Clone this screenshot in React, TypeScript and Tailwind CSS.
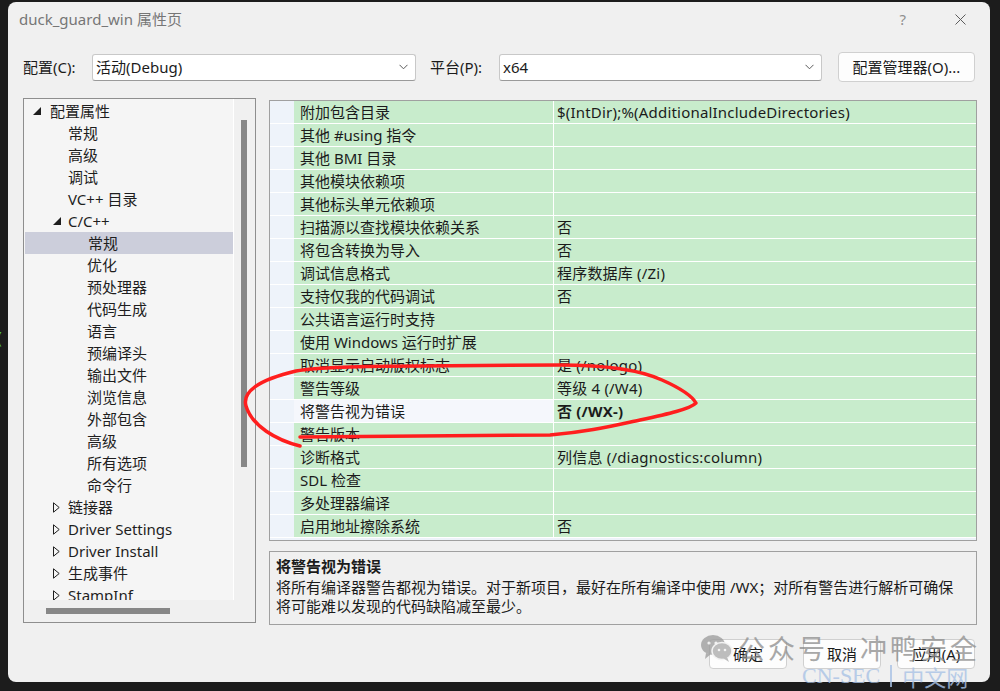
// 属性页对话框 (VS C/C++ 常规)
import React from 'react';

type TreeNode = {
  label: string;
  level: 0 | 1 | 2;
  arrow?: 'open' | 'closed';
  selected?: boolean;
};

const tree: TreeNode[] = [
  { label: '配置属性', level: 0, arrow: 'open' },
  { label: '常规', level: 1 },
  { label: '高级', level: 1 },
  { label: '调试', level: 1 },
  { label: 'VC++ 目录', level: 1 },
  { label: 'C/C++', level: 1, arrow: 'open' },
  { label: '常规', level: 2, selected: true },
  { label: '优化', level: 2 },
  { label: '预处理器', level: 2 },
  { label: '代码生成', level: 2 },
  { label: '语言', level: 2 },
  { label: '预编译头', level: 2 },
  { label: '输出文件', level: 2 },
  { label: '浏览信息', level: 2 },
  { label: '外部包含', level: 2 },
  { label: '高级', level: 2 },
  { label: '所有选项', level: 2 },
  { label: '命令行', level: 2 },
  { label: '链接器', level: 1, arrow: 'closed' },
  { label: 'Driver Settings', level: 1, arrow: 'closed' },
  { label: 'Driver Install', level: 1, arrow: 'closed' },
  { label: '生成事件', level: 1, arrow: 'closed' },
  { label: 'StampInf', level: 1, arrow: 'closed' },
];

const rows: { name: string; value: string; selected?: boolean }[] = [
  { name: '附加包含目录', value: '$(IntDir);%(AdditionalIncludeDirectories)' },
  { name: '其他 #using 指令', value: '' },
  { name: '其他 BMI 目录', value: '' },
  { name: '其他模块依赖项', value: '' },
  { name: '其他标头单元依赖项', value: '' },
  { name: '扫描源以查找模块依赖关系', value: '否' },
  { name: '将包含转换为导入', value: '否' },
  { name: '调试信息格式', value: '程序数据库 (/Zi)' },
  { name: '支持仅我的代码调试', value: '否' },
  { name: '公共语言运行时支持', value: '' },
  { name: '使用 Windows 运行时扩展', value: '' },
  { name: '取消显示启动版权标志', value: '是 (/nologo)' },
  { name: '警告等级', value: '等级 4 (/W4)' },
  { name: '将警告视为错误', value: '否 (/WX-)', selected: true },
  { name: '警告版本', value: '' },
  { name: '诊断格式', value: '列信息 (/diagnostics:column)' },
  { name: 'SDL 检查', value: '' },
  { name: '多处理器编译', value: '' },
  { name: '启用地址擦除系统', value: '否' },
];

function Chevron() {
  return (
    <svg width="9" height="6" viewBox="0 0 9 6" className="mr-[7px]">
      <path d="M0.5 0.8 L4.5 4.8 L8.5 0.8" fill="none" stroke="#5a5a5a" strokeWidth="1" />
    </svg>
  );
}

function Select({ value, width }: { value: string; width: string }) {
  return (
    <div
      className={`${width} h-[27px] flex items-center justify-between bg-white border border-[#c8c8c8] border-b-[#9a9a9a] rounded-[3px] pl-[3px]`}
    >
      <span className="text-[15px] text-[#1b1b1b]">{value}</span>
      <Chevron />
    </div>
  );
}

function TreeRow({ node }: { node: TreeNode }) {
  const pad =
    node.level === 0 ? 'pl-[9px]' : node.level === 1 ? (node.arrow ? 'pl-[29px]' : 'pl-[44px]') : 'pl-[63px]';
  return (
    <div
      className={`h-[22px] flex items-center ${pad} ${node.selected ? 'bg-[#cccedb] ml-[1px]' : ''}`}
    >
      {node.arrow === 'open' && (
        <span className={`${node.level === 0 ? 'w-[17px]' : 'w-[15px]'} flex items-center`}>
          <svg width="8" height="8" viewBox="0 0 8 8">
            <polygon points="0,8 8,8 8,0" fill="#1e1e1e" />
          </svg>
        </span>
      )}
      {node.arrow === 'closed' && (
        <span className="w-[15px] flex items-center">
          <svg width="7" height="11" viewBox="0 0 7 11">
            <polygon points="0.5,0.8 6.2,5.5 0.5,10.2" fill="none" stroke="#1e1e1e" strokeWidth="1" />
          </svg>
        </span>
      )}
      <span className="text-[15px] text-[#1e1e1e] whitespace-nowrap">{node.label}</span>
    </div>
  );
}

function WeChatIcon() {
  return (
    <svg width="34" height="30" viewBox="0 0 34 30">
      <ellipse cx="13" cy="12" rx="12" ry="10" fill="#9a9a9a" />
      <path d="M6 20 L5 26 L11 21 Z" fill="#9a9a9a" />
      <ellipse cx="22" cy="18" rx="10" ry="8.5" fill="#a8a8a8" stroke="#f0f0f0" strokeWidth="1.5" />
      <path d="M27 24 L29 29 L23 25 Z" fill="#a8a8a8" />
      <circle cx="9" cy="10" r="1.6" fill="#f0f0f0" />
      <circle cx="16" cy="10" r="1.6" fill="#f0f0f0" />
      <circle cx="19" cy="17" r="1.3" fill="#f0f0f0" />
      <circle cx="25" cy="17" r="1.3" fill="#f0f0f0" />
    </svg>
  );
}

export default function App() {
  return (
    <div className="relative w-[1000px] h-[691px] bg-[#1c1c1c] overflow-hidden font-['Noto_Sans','Noto_Sans_CJK_SC',sans-serif]">
      {/* 背后编辑器的一点代码 */}
      <span className="absolute left-[-3px] top-[326px] text-[16px] text-[#4ec94e]">(</span>

      <div className="ml-[8px] mt-[2px] w-[982px] h-[680px] bg-[#f0f0f0] rounded-[8px] flex flex-col">
        {/* 标题栏 */}
        <div className="h-[34px] flex items-center pl-[11px] pr-[24px]">
          <span className="flex-1 text-[15px] text-[#767676]">duck_guard_win 属性页</span>
          <span className="text-[15px] text-[#8f8f8f] mr-[49px]">?</span>
          <svg width="11" height="11" viewBox="0 0 11 11">
            <path d="M0.5 0.5 L10.5 10.5 M10.5 0.5 L0.5 10.5" stroke="#5c5c5c" strokeWidth="1" />
          </svg>
        </div>

        {/* 配置 / 平台 */}
        <div className="mt-[16px] h-[30px] flex items-center px-[15px] text-[15px] text-[#1b1b1b]">
          <span className="w-[69px]">配置(C):</span>
          <Select value="活动(Debug)" width="w-[324px]" />
          <span className="ml-[14px] w-[69px]">平台(P):</span>
          <Select value="x64" width="w-[323px]" />
          <button className="ml-[16px] w-[137px] h-[30px] bg-[#fdfdfd] border border-[#d0d0d0] rounded-[4px] text-[15px] text-[#1b1b1b]">
            配置管理器(O)...
          </button>
        </div>

        {/* 主区域 */}
        <div className="mt-[16px] flex pl-[15px]">
          {/* 左侧树 */}
          <div className="w-[233px] h-[525px] border border-[#8e8e8e] flex flex-col bg-[#f0f0f0]">
            <div className="flex-1 flex min-h-0">
              <div className="flex-1 bg-[#f5f5f5] overflow-hidden pt-[1px]">
                {tree.map((n, i) => (
                  <TreeRow key={i} node={n} />
                ))}
              </div>
              <div className="w-[22px] border-l border-white bg-[#f0f0f0]">
                <div className="ml-[7px] mt-[21px] w-[6px] h-[347px] bg-[#878787]" />
              </div>
            </div>
            <div className="h-[22px] flex">
              <div className="flex-1 bg-[#f0f0f0]">
                <div className="ml-[22px] mt-[8px] w-[124px] h-[6px] bg-[#878787]" />
              </div>
              <div className="w-[22px] bg-[#f0f0f0]" />
            </div>
          </div>

          {/* 右侧属性表 */}
          <div className="ml-[13px] mt-[2px] w-[708px] flex flex-col">
            <div className="h-[441px] border border-[#a0a0a0] bg-[#eef3fa] overflow-hidden">
              {rows.map((r, i) => (
                <div key={i} className="h-[23px] flex border-b border-white">
                  <div className="w-[24px]" />
                  <div
                    className={`w-[259px] flex items-center pl-[6px] text-[15px] text-[#1b1b1b] whitespace-nowrap ${
                      r.selected ? 'bg-[#f5f7fc]' : 'bg-[#c8eccc]'
                    }`}
                  >
                    {r.name}
                  </div>
                  <div className="w-[1px] bg-white" />
                  <div
                    className={`flex-1 flex items-center pl-[3px] bg-[#c8eccc] text-[15px] text-[#1b1b1b] whitespace-nowrap tracking-[0.2px] ${
                      r.selected ? 'font-bold' : ''
                    }`}
                  >
                    {r.value}
                  </div>
                </div>
              ))}
            </div>

            {/* 描述 */}
            <div className="mt-[10px] h-[74px] border border-[#a0a0a0] pl-[6px] pt-[4px] text-[15px] text-[#1b1b1b]">
              <div className="leading-[20px] font-bold">将警告视为错误</div>
              <div className="mt-[2px] leading-[19px] whitespace-nowrap">
                将所有编译器警告都视为错误。对于新项目，最好在所有编译中使用 /WX；对所有警告进行解析可确保
              </div>
              <div className="leading-[19px] whitespace-nowrap">将可能难以发现的代码缺陷减至最少。</div>
            </div>
          </div>
        </div>

        {/* 按钮 */}
        <div className="mt-[14px] flex justify-end gap-[16px] pr-[15px]">
          {['确定', '取消', '应用(A)'].map((t) => (
            <button
              key={t}
              className="w-[78px] h-[30px] bg-[#fdfdfd] border border-[#d0d0d0] rounded-[4px] text-[15px] text-[#1b1b1b]"
            >
              {t}
            </button>
          ))}
        </div>
      </div>

      {/* 红色圈注 */}
      <svg className="absolute left-0 top-0 pointer-events-none" width="1000" height="691" viewBox="0 0 1000 691">
        <path
          d="M300 446 C276 440 252 426 246 406 C242 392 258 380 296 371 C320 367 360 366 420 366 L560 365 C610 365 640 370 662 380 C680 388 692 396 696 403 C690 409 668 414 640 420 C612 426 588 432 550 435 L300 437"
          fill="none"
          stroke="#ff1e1e"
          strokeWidth="3.5"
          strokeLinecap="round"
          strokeLinejoin="round"
        />
      </svg>

      {/* 水印 */}
      <div className="absolute left-[700px] top-[633px] flex items-center pointer-events-none opacity-75">
        <WeChatIcon />
        <span className="ml-[4px] text-[27px] leading-[30px] text-[#8c8c8c] tracking-[3px] font-['Noto_Sans_CJK_SC',sans-serif]">
          公众号
        </span>
        <span className="ml-[32px] text-[27px] leading-[30px] text-[#8c8c8c] tracking-[3px] font-['Noto_Sans_CJK_SC',sans-serif]">
          冲鸭安全
        </span>
      </div>
      <div className="absolute left-[802px] top-[664px] flex items-center pointer-events-none text-[#a9c3e6] opacity-80 font-['Liberation_Serif','Noto_Sans_CJK_SC',serif]">
        <span className="text-[22px] leading-[24px]">CN-SEC</span>
        <span className="ml-[10px] w-[2px] h-[22px] bg-[#a9c3e6]" />
        <span className="ml-[10px] text-[22px] leading-[24px] font-['Noto_Sans_CJK_SC',serif]">中文网</span>
      </div>
    </div>
  );
}
